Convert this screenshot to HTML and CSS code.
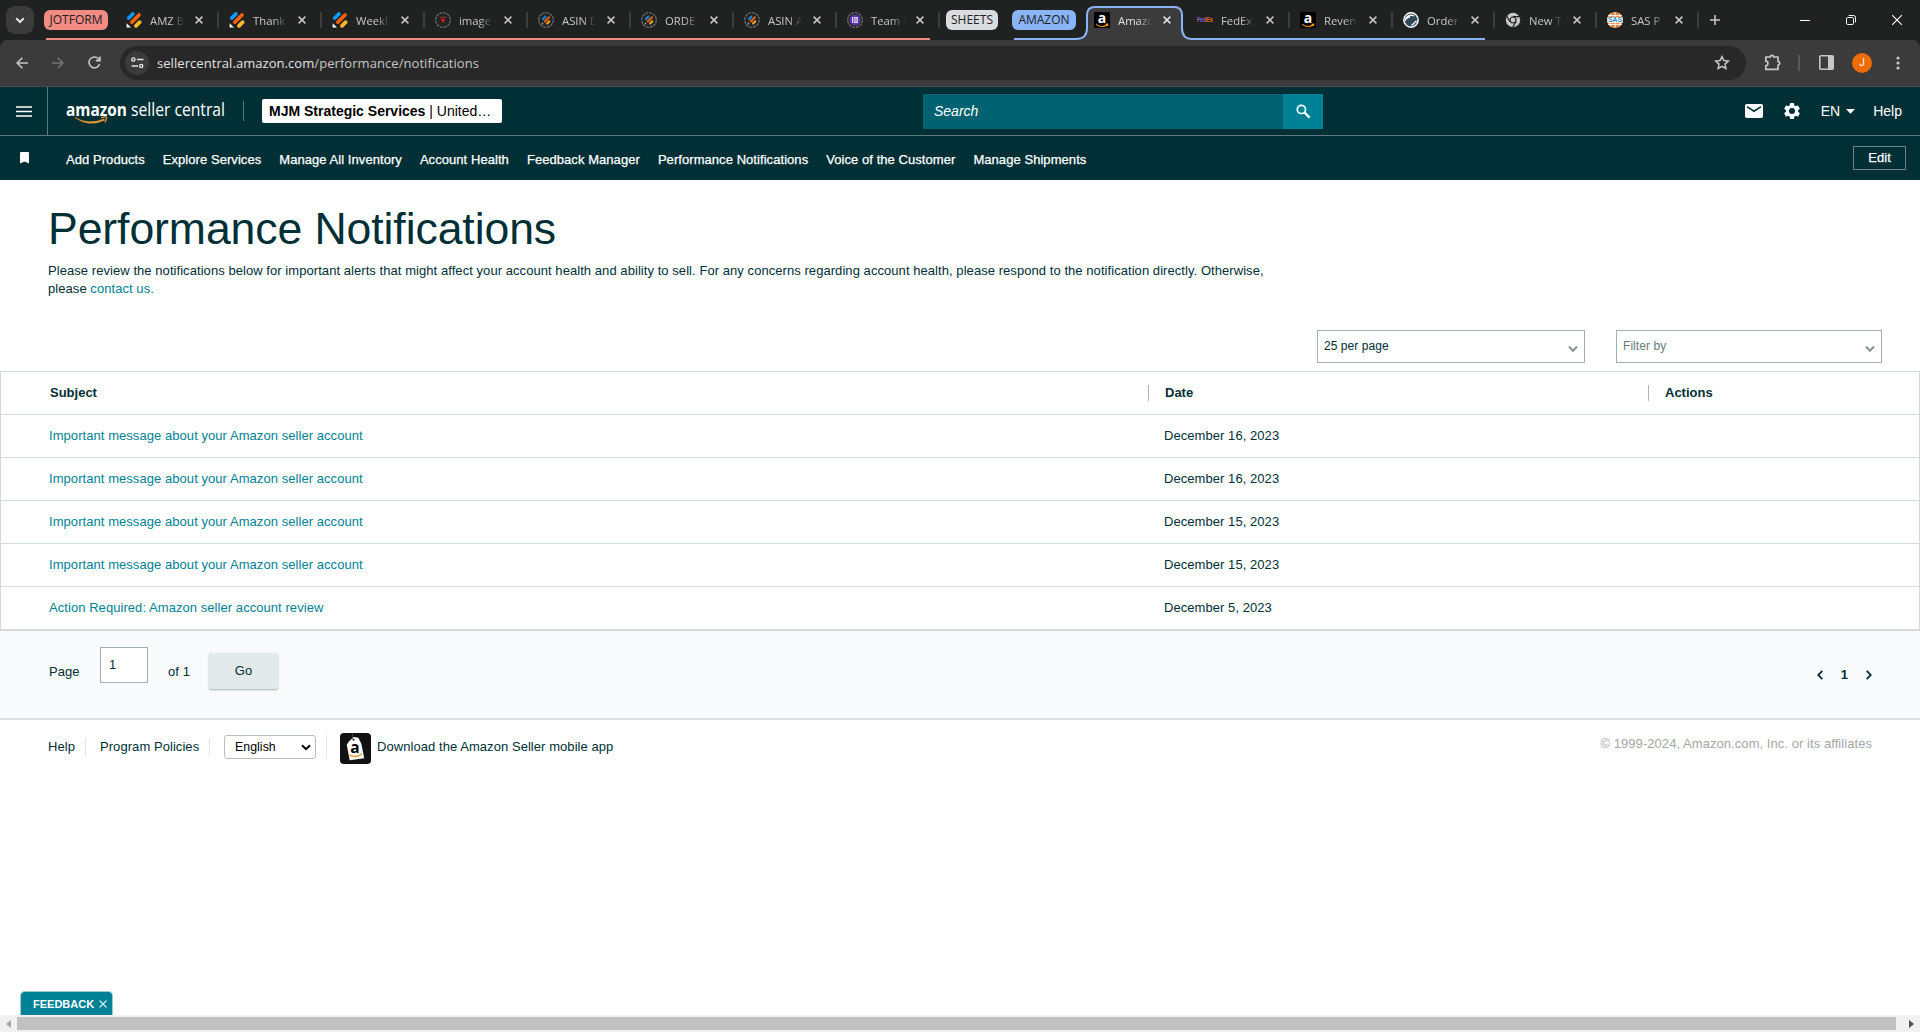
FILE: index.html
```html
<!DOCTYPE html>
<html lang="en">

<head>
    <meta charset="UTF-8">
    <title>Performance Notifications</title>
    <link rel="stylesheet" href="styles.css">
</head>

<body>
    <!-- shared icons -->
    <svg class="defs">
        <symbol id="close" viewBox="0 0 8 8">
            <path d="M.6 .6L7.4 7.4M7.4 .6L.6 7.4" stroke="currentColor" stroke-width="1.5" />
        </symbol>
        <symbol id="jotform" viewBox="0 0 16 16">
            <path d="M2.8 6L6.8 2" stroke="#0a99ff" stroke-width="3.8" stroke-linecap="round" />
            <path d="M5.8 10.2L13 3" stroke="#ff6100" stroke-width="3.6" stroke-linecap="round" />
            <path d="M10 13.8L13.6 10.2" stroke="#ffb629" stroke-width="3.8" stroke-linecap="round" />
            <path d="M.6 11.2V15.6H5z" fill="#fff" />
        </symbol>
        <symbol id="jotform-ring" viewBox="0 0 16 16">
            <circle cx="8" cy="8" r="7.3" fill="none" stroke="#777" stroke-width="1.1" stroke-dasharray="3 .8" />
            <path d="M5 7.2L7.4 4.7" stroke="#0a80d4" stroke-width="2.4" stroke-linecap="round" />
            <path d="M6.8 9.4L11 5.2" stroke="#e05a08" stroke-width="2.2" stroke-linecap="round" />
            <path d="M9.2 11.4L11.2 9.4" stroke="#e0a028" stroke-width="2.4" stroke-linecap="round" />
            <path d="M3.8 10.2V12.2H5.8z" fill="#ccc" />
        </symbol>
        <symbol id="amazon" viewBox="0 0 16 16">
            <path d="M0 0H16V16H0z" fill="#000" />
            <text x="8" y="11" text-anchor="middle" class="fav-a">a</text>
            <path d="M2 12.4Q8 16.4 13 13M11.4 12.3L13.8 12.2L13.1 14.2" fill="none" stroke="#f90" stroke-width="1.1" />
        </symbol>
    </svg>

    <div class="tabstrip">
        <div class="tab-search">
            <svg width="10" height="7" viewBox="0 0 10 7"><path d="M1.2 1.2L5 5L8.8 1.2" fill="none" stroke="#e3e3e3" stroke-width="2" /></svg>
        </div>
        <div class="group red">
            <span class="chip">JOTFORM</span>
            <div class="tab"><svg class="fav"><use href="#jotform" /></svg><span class="name">AMZ B</span><svg class="x"><use href="#close" /></svg></div>
            <div class="tab"><svg class="fav"><use href="#jotform" /></svg><span class="name">Thank</span><svg class="x"><use href="#close" /></svg></div>
            <div class="tab"><svg class="fav"><use href="#jotform" /></svg><span class="name">Weekl</span><svg class="x"><use href="#close" /></svg></div>
            <div class="tab">
                <svg class="fav" viewBox="0 0 16 16">
                    <circle cx="8" cy="8" r="7.3" fill="none" stroke="#777" stroke-width="1.1" stroke-dasharray="3 .8" />
                    <path d="M4.5 5.2H11.5" stroke="#a33" stroke-width="1" />
                    <path d="M5.6 7H10.4L8 11.2z" fill="#e8141c" />
                </svg>
                <span class="name">image</span><svg class="x"><use href="#close" /></svg>
            </div>
            <div class="tab"><svg class="fav"><use href="#jotform-ring" /></svg><span class="name">ASIN D</span><svg class="x"><use href="#close" /></svg></div>
            <div class="tab"><svg class="fav"><use href="#jotform-ring" /></svg><span class="name">ORDE</span><svg class="x"><use href="#close" /></svg></div>
            <div class="tab"><svg class="fav"><use href="#jotform-ring" /></svg><span class="name">ASIN A</span><svg class="x"><use href="#close" /></svg></div>
            <div class="tab">
                <svg class="fav" viewBox="0 0 16 16">
                    <circle cx="8" cy="8" r="7.3" fill="none" stroke="#777" stroke-width="1.1" stroke-dasharray="3 .8" />
                    <circle cx="8" cy="8" r="5.6" fill="#5f35a8" />
                    <path d="M5 5H11V11H5z" fill="#d8cdf0" />
                    <path d="M6.6 5V11M7.4 7H10.4M7.4 9H10.4" stroke="#5f35a8" stroke-width=".7" />
                </svg>
                <span class="name">Team I</span><svg class="x"><use href="#close" /></svg>
            </div>
        </div>
        <span class="chip grey">SHEETS</span>
        <div class="group blue">
            <span class="chip">AMAZON</span>
            <div class="tab active"><svg class="fav"><use href="#amazon" /></svg><span class="name">Amazo</span><svg class="x"><use href="#close" /></svg></div>
            <div class="tab">
                <svg class="fav" viewBox="0 0 16 16">
                    <text x="0" y="10" class="fedex" textLength="9" lengthAdjust="spacingAndGlyphs" fill="#9a62d8">Fed</text>
                    <text x="9" y="10" class="fedex" textLength="7" lengthAdjust="spacingAndGlyphs" fill="#ff6a10">Ex</text>
                </svg>
                <span class="name">FedEx</span><svg class="x"><use href="#close" /></svg>
            </div>
            <div class="tab"><svg class="fav"><use href="#amazon" /></svg><span class="name">Reven</span><svg class="x"><use href="#close" /></svg></div>
            <div class="tab narrow">
                <svg class="fav" viewBox="0 0 16 16">
                    <circle cx="8" cy="8" r="7.2" fill="#2f4a5a" stroke="#fff" stroke-width="1.4" />
                    <path d="M2.2 9C2.6 4.5 6.5 2.4 11 3.6M3.5 6.4L7 4.6M8.6 13.6L13.6 8.8" fill="none" stroke="#fff" stroke-width="1.4" />
                </svg>
                <span class="name">Order</span><svg class="x"><use href="#close" /></svg>
            </div>
            <!-- group outline running around the active tab -->
            <svg class="outline" width="484" height="40" viewBox="0 0 484 40">
                <path class="fill" d="M64 40C72 40 75 37 75 29V15Q75 7 83 7H162Q170 7 170 15V29Q170 40 181 40z" />
                <path class="line" d="M2 39H64C72 39 75 35 75 28V15Q75 7 83 7H162Q170 7 170 15V28Q170 39 180 39H473" />
            </svg>
        </div>
        <div class="tab narrow">
            <svg class="fav" viewBox="0 0 16 16">
                <circle cx="8" cy="8" r="7.2" fill="#c7c7c7" />
                <path d="M8 4.6H14.6M5 9.7L1.8 4.2M11 9.7L7.6 15.3" stroke="#202221" stroke-width="1.2" />
                <circle cx="8" cy="8" r="3" fill="#c7c7c7" stroke="#202221" stroke-width="1.2" />
            </svg>
            <span class="name">New T</span><svg class="x"><use href="#close" /></svg>
        </div>
        <div class="tab narrow">
            <svg class="fav" viewBox="0 0 16 16">
                <circle cx="8" cy="8" r="8" fill="#e8833a" />
                <path d="M8 0V16M1 3.6H15M1 12.4H15M3.6 1.5Q1 8 3.6 14.5M12.4 1.5Q15 8 12.4 14.5" fill="none" stroke="#fff" stroke-width=".9" />
                <path d="M.4 5.2H15.6V10.8H.4z" fill="#fff" />
                <text x="1" y="10.3" class="sas" textLength="14" lengthAdjust="spacingAndGlyphs">SAS</text>
            </svg>
            <span class="name">SAS P</span><svg class="x"><use href="#close" /></svg>
        </div>
        <svg class="plus" width="10" height="10"><path d="M5 0V10M0 5H10" stroke="#c7c7c7" stroke-width="1.6" /></svg>
        <div class="window-buttons">
            <svg width="10" height="10"><path d="M0 5.5H10" stroke="#fff" /></svg>
            <svg width="10" height="10" viewBox="0 0 10 10"><rect x=".5" y="2.5" width="7" height="7" rx="1.2" fill="none" stroke="#fff" /><path d="M2.6 .5H7.5Q9.5 .5 9.5 2.5V7.4" fill="none" stroke="#fff" /></svg>
            <svg width="10" height="10"><path d="M0 0L10 10M10 0L0 10" stroke="#fff" stroke-width="1.1" /></svg>
        </div>
    </div>

    <div class="toolbar-wrap">
        <div class="toolbar">
            <svg class="back" width="12" height="12" viewBox="0 0 12 12"><path d="M12 6H1.2M6.4 .7L1.1 6L6.4 11.3" fill="none" stroke="#c7c7c7" stroke-width="1.6" /></svg>
            <svg class="forward" width="12" height="12" viewBox="0 0 12 12"><path d="M0 6H10.8M5.6 .7L10.9 6L5.6 11.3" fill="none" stroke="#757575" stroke-width="1.6" /></svg>
            <svg class="reload" width="13" height="13" viewBox="0 0 13 13"><path d="M11.6 8A5.4 5.4 0 1 1 10.4 2.7L11.6 4M12 .4V4.6H7.8" fill="none" stroke="#c7c7c7" stroke-width="1.6" /></svg>
            <div class="omnibox">
                <span class="site-info">
                    <svg width="13" height="12" viewBox="0 0 13 12"><path d="M6 2.5H12.5M.5 9H7" stroke="#e3e3e3" stroke-width="1.6" /><circle cx="2.4" cy="2.5" r="1.6" fill="none" stroke="#e3e3e3" stroke-width="1.4" /><circle cx="10.2" cy="9" r="1.6" fill="none" stroke="#e3e3e3" stroke-width="1.4" /></svg>
                </span>
                <span class="url">sellercentral.amazon.com<i>/performance/notifications</i></span>
                <svg class="star" width="16" height="15" viewBox="0 0 16 15"><path d="M8 1.6L9.9 5.6L14.3 6.1L11 9.1L11.9 13.5L8 11.3L4.1 13.5L5 9.1L1.7 6.1L6.1 5.6z" fill="none" stroke="#c7c7c7" stroke-width="1.5" /></svg>
            </div>
            <svg class="puzzle" width="17" height="17" viewBox="0 0 17 17"><path d="M1.8 3H6.3C6.3 .8 9.7 .8 9.7 3H14V7.6C16.3 7.6 16.3 11 14 11V15.4H1.8V11.6C4.6 11.4 4.6 7.4 1.8 7.2z" fill="none" stroke="#c7c7c7" stroke-width="1.7" stroke-linejoin="round" /></svg>
            <span class="bar"></span>
            <svg class="panel" width="15" height="15" viewBox="0 0 15 15"><rect x=".8" y=".8" width="13.4" height="13.4" rx="1" fill="none" stroke="#c7c7c7" stroke-width="1.6" /><path d="M9 1H14V14H9z" fill="#c7c7c7" /></svg>
            <span class="avatar">J</span>
            <svg class="dots" width="4" height="14"><circle cx="2" cy="2" r="1.6" /><circle cx="2" cy="7" r="1.6" /><circle cx="2" cy="12" r="1.6" /></svg>
        </div>
    </div>

    <div class="header">
        <div class="menu"><svg width="16" height="11"><path d="M0 1H16M0 5.5H16M0 10H16" stroke="#fff" stroke-width="1.6" /></svg></div>
        <svg class="logo" width="160" height="30" viewBox="0 0 160 30">
            <text x="0" y="17" class="logo-bold" textLength="61" lengthAdjust="spacingAndGlyphs">amazon</text>
            <text x="65" y="17" class="logo-light" textLength="94" lengthAdjust="spacingAndGlyphs">seller central</text>
            <path d="M9 18.5Q23 26.4 38 20L38.6 21.2Q22 28.6 9 18.5z" fill="#f29a2e" stroke="#f29a2e" stroke-width=".5" />
            <path d="M35 18.6Q40.6 17.2 40.6 18.6Q40.6 20.6 38.8 23.4" fill="none" stroke="#f29a2e" stroke-width="1.2" />
        </svg>
        <span class="split"></span>
        <div class="account"><b>MJM Strategic Services</b> | United…</div>
        <div class="search">
            <span>Search</span>
            <div class="search-btn"><svg width="15" height="15" viewBox="0 0 15 15"><circle cx="5.4" cy="5.4" r="4.1" fill="none" stroke="#fff" stroke-width="1.7" /><path d="M8.5 8.5L13.6 13.6" stroke="#fff" stroke-width="2.2" /></svg></div>
        </div>
        <div class="header-right">
            <svg width="18" height="14" viewBox="0 0 18 14"><rect width="18" height="14" rx="1.8" fill="#fff" /><path d="M2 2.6L9 7.2L16 2.6" fill="none" stroke="#002f36" stroke-width="1.6" /></svg>
            <svg class="gear" width="20" height="20" viewBox="0 0 24 24"><path fill="#fff" d="M19.14 12.94c.04-.3.06-.61.06-.94 0-.32-.02-.64-.07-.94l2.03-1.58a.49.49 0 0 0 .12-.61l-1.92-3.32a.49.49 0 0 0-.59-.22l-2.39.96c-.5-.38-1.03-.7-1.62-.94l-.36-2.54a.48.48 0 0 0-.48-.41h-3.84c-.24 0-.43.17-.47.41l-.36 2.54c-.59.24-1.13.57-1.62.94l-2.39-.96a.48.48 0 0 0-.59.22L2.74 8.87c-.12.21-.08.47.12.61l2.03 1.58c-.05.3-.09.63-.09.94s.02.64.07.94l-2.03 1.58a.49.49 0 0 0-.12.61l1.92 3.32c.12.22.37.29.59.22l2.39-.96c.5.38 1.03.7 1.62.94l.36 2.54c.05.24.24.41.48.41h3.84c.24 0 .44-.17.47-.41l.36-2.54c.59-.24 1.13-.56 1.62-.94l2.39.96c.22.08.47 0 .59-.22l1.92-3.32a.49.49 0 0 0-.12-.61zM12 15.6A3.6 3.6 0 1 1 12 8.4a3.6 3.6 0 0 1 0 7.2z" /></svg>
            <span class="lang">EN</span>
            <svg class="caret" width="9" height="5"><path d="M0 0H9L4.5 4.8z" fill="#fff" /></svg>
            <span>Help</span>
        </div>
    </div>

    <div class="nav">
        <svg class="bookmark" width="9" height="12"><path d="M0 1Q0 0 1 0H8Q9 0 9 1V11.6L4.5 9.6L0 11.6z" fill="#fff" /></svg>
        <a>Add Products</a>
        <a>Explore Services</a>
        <a>Manage All Inventory</a>
        <a>Account Health</a>
        <a>Feedback Manager</a>
        <a>Performance Notifications</a>
        <a>Voice of the Customer</a>
        <a>Manage Shipments</a>
        <span class="edit">Edit</span>
    </div>

    <div class="content">
        <h1>Performance Notifications</h1>
        <p>Please review the notifications below for important alerts that might affect your account health and ability to sell. For any concerns regarding account health, please respond to the notification directly. Otherwise,<br>please <a>contact us.</a></p>
        <div class="filters">
            <div class="dropdown">25 per page <svg width="10" height="8"><path d="M1 1.5L5 5.7L9 1.5" fill="none" stroke="#879596" stroke-width="2" /></svg></div>
            <div class="dropdown filter">Filter by <svg width="10" height="8"><path d="M1 1.5L5 5.7L9 1.5" fill="none" stroke="#879596" stroke-width="2" /></svg></div>
        </div>
    </div>

    <div class="table">
        <div class="row head"><b>Subject</b><b>Date</b><b>Actions</b></div>
        <div class="row"><a>Important message about your Amazon seller account</a><span>December 16, 2023</span></div>
        <div class="row"><a>Important message about your Amazon seller account</a><span>December 16, 2023</span></div>
        <div class="row"><a>Important message about your Amazon seller account</a><span>December 15, 2023</span></div>
        <div class="row"><a>Important message about your Amazon seller account</a><span>December 15, 2023</span></div>
        <div class="row"><a>Action Required: Amazon seller account review</a><span>December 5, 2023</span></div>
    </div>

    <div class="pagination">
        <span class="page-label">Page</span>
        <div class="page-input">1</div>
        <span class="page-of">of 1</span>
        <div class="go">Go</div>
        <div class="pager">
            <svg width="6" height="10"><path d="M5.3 .8L1.2 5L5.3 9.2" fill="none" stroke="#002f36" stroke-width="1.8" /></svg>
            <b>1</b>
            <svg width="6" height="10"><path d="M.7 .8L4.8 5L.7 9.2" fill="none" stroke="#002f36" stroke-width="1.8" /></svg>
        </div>
    </div>

    <div class="footer">
        <span class="f-help">Help</span>
        <span class="f-policy">Program Policies</span>
        <div class="f-lang">
            <div class="select">English <svg width="10" height="7"><path d="M1 1.2L5 5.2L9 1.2" fill="none" stroke="#000" stroke-width="2" /></svg></div>
        </div>
        <svg class="app" width="31" height="31" viewBox="0 0 32 32">
            <rect width="32" height="32" rx="4" fill="#111" />
            <path d="M9 9L14 4L19 5L22 11L25 26L10 28L7 12z" fill="#fff" />
            <path d="M13 0V6" stroke="#444" />
            <circle cx="14" cy="7" r="1" fill="#111" />
            <text x="15.5" y="21" text-anchor="middle" class="app-a">a</text>
            <path d="M10 22.5Q16 26.5 22.5 21.5" fill="none" stroke="#f29a2e" stroke-width="1.5" />
        </svg>
        <span>Download the Amazon Seller mobile app</span>
        <span class="copy">© 1999-2024, Amazon.com, Inc. or its affiliates</span>
    </div>

    <div class="feedback">FEEDBACK <svg width="8" height="8" viewBox="0 0 8 8"><path d="M.5 .5L7.5 7.5M7.5 .5L.5 7.5" stroke="#d5edf0" stroke-width="1.2" /></svg></div>
    <div class="scrollbar">
        <svg width="5" height="8"><path d="M5 0V8L0 4z" fill="#a3a3a3" /></svg>
        <div class="thumb"></div>
        <svg width="5" height="8"><path d="M0 0V8L5 4z" fill="#505050" /></svg>
    </div>
</body>

</html>
```
FILE: styles.css
```css
* {
    margin: 0;
    padding: 0;
    box-sizing: border-box;
}

body {
    display: flex;
    flex-direction: column;
    height: 1032px;
    overflow: hidden;
    background: #fff;
    color: #002f36;
    font: 13px/18px "Liberation Sans", Arial, sans-serif;
    letter-spacing: 0.06px;
    white-space: nowrap;
}

svg {
    display: block;
    flex: none;
}

.defs {
    position: absolute;
    width: 0;
    height: 0;
}

/* browser tabs */
.tabstrip {
    display: flex;
    height: 40px;
    padding-left: 6px;
    background: #202221;
    color: #c7c7c7;
    font: 11.3px/20px "Open Sans", "Noto Sans", sans-serif;
    letter-spacing: 0;
}

.tab-search {
    display: flex;
    align-items: center;
    justify-content: center;
    width: 28px;
    height: 28px;
    margin: 6px 10px 0 0;
    border-radius: 9px;
    background: #3b3b3b;
}

.group {
    position: relative;
    display: flex;
}

.red::after {
    content: "";
    position: absolute;
    left: 2px;
    right: 10px;
    bottom: 0;
    height: 2px;
    background: #f28b82;
}

.chip {
    width: 64px;
    height: 20px;
    margin: 10px 8px 0 0;
    border-radius: 6px;
    background: #f28b82;
    color: #202124;
    font-size: 12px;
    line-height: 19px;
    text-align: center;
}

.chip.grey {
    width: 52px;
    margin: 10px 14px 0 6px;
    background: #dadce0;
}

.blue .chip {
    background: #8ab4f8;
}

.tab {
    position: relative;
    z-index: 1;
    display: flex;
    align-items: center;
    width: 103px;
    height: 40px;
    padding-left: 10px;
}

.tab.narrow {
    width: 102px;
}

.tab::after {
    content: "";
    width: 2px;
    height: 16px;
    margin-left: auto;
    background: #3d3f3e;
}

.tab.active::after {
    background: none;
}

.active {
    color: #e3e3e3;
}

.fav {
    width: 16px;
    height: 16px;
}

.name {
    width: 34px;
    margin-left: 8px;
    padding-top: 2px;
    -webkit-mask-image: linear-gradient(to right, #000 60%, transparent);
    mask-image: linear-gradient(to right, #000 60%, transparent);
}

.x {
    width: 8px;
    height: 8px;
    margin-left: 11px;
}

.narrow .x {
    margin-left: 10px;
}

.fav-a {
    fill: #fff;
    font: bold 14px "Open Sans", sans-serif;
}

.fedex {
    font: bold 7.5px "Liberation Sans", sans-serif;
}

.sas {
    fill: #1c88c7;
    font: bold 7px "Liberation Sans", sans-serif;
}

.outline {
    position: absolute;
    left: 0;
    top: 0;
}

.outline .fill {
    fill: #3b3b3b;
}

.outline .line {
    fill: none;
    stroke: #8ab4f8;
    stroke-width: 2;
}

.plus {
    margin: 15px 0 0 11px;
}

.window-buttons {
    display: flex;
    gap: 36px;
    margin: 15px 18px 0 auto;
}

/* browser toolbar */
.toolbar-wrap {
    background: #202221;
}

.toolbar {
    display: flex;
    align-items: center;
    height: 47px;
    padding: 0 20px 1px 16px;
    border-bottom: 1px solid #4a4a4a;
    border-radius: 8px 8px 0 0;
    background: #3b3b3b;
}

.forward {
    margin-left: 24px;
}

.reload {
    margin: 0 19px 0 24px;
}

.omnibox {
    display: flex;
    align-items: center;
    width: 1626px;
    height: 34px;
    padding: 0 16px 0 5px;
    border-radius: 17px;
    background: #282828;
}

.site-info {
    display: flex;
    align-items: center;
    justify-content: center;
    width: 24px;
    height: 24px;
    margin-right: 8px;
    border-radius: 12px;
    background: #3b3b3b;
}

.url {
    color: #e3e3e3;
    font: 13px/18px "Open Sans", "Noto Sans", sans-serif;
}

.url i {
    color: #c7c7c7;
    font-style: normal;
}

.star {
    margin-left: auto;
}

.puzzle {
    margin-left: 18px;
}

.bar {
    width: 2px;
    height: 16px;
    margin: 0 19px 0 17px;
    background: #5b5b5b;
}

.avatar {
    width: 20px;
    height: 20px;
    margin: 0 24px 0 18px;
    border-radius: 10px;
    background: #ef6c00;
    color: #fff;
    font: 10px/20px Roboto, sans-serif;
    text-align: center;
}

.dots {
    fill: #c7c7c7;
}

/* seller central header */
.header {
    display: flex;
    align-items: center;
    height: 49px;
    border-bottom: 1px solid #5d7a7e;
    background: #002f36;
    color: #fff;
    font-size: 14px;
    letter-spacing: 0;
}

.menu {
    display: flex;
    align-items: center;
    width: 48px;
    height: 48px;
    padding-left: 16px;
    border-right: 1px solid #5d7a7e;
}

.logo {
    margin: 5px 17px 0 18px;
    fill: #fff;
}

.logo-bold {
    font: bold 18px "Open Sans", sans-serif;
}

.logo-light {
    font: 18px "Open Sans", sans-serif;
}

.split {
    width: 1px;
    height: 20px;
    margin-right: 18px;
    background: #5d7a7e;
}

.account {
    width: 240px;
    height: 24px;
    padding-left: 7px;
    border-radius: 2px;
    background: #fff;
    color: #000;
    line-height: 24px;
}

.search {
    display: flex;
    align-items: center;
    justify-content: space-between;
    width: 400px;
    height: 35px;
    margin-left: 421px;
    padding-left: 11px;
    background: #006170;
    font-style: italic;
}

.search-btn {
    display: flex;
    align-items: center;
    justify-content: center;
    width: 40px;
    height: 35px;
    background: #008296;
}

.header-right {
    display: flex;
    align-items: center;
    margin: 0 18px 0 auto;
}

.gear {
    margin: 0 19px;
}

.caret {
    margin: 0 18px 0 6px;
}

.nav {
    display: flex;
    align-items: center;
    gap: 18px;
    height: 44px;
    padding: 0 14px 0 20px;
    background: #002f36;
    color: #fff;
}

.nav a {
    padding-top: 3px;
    color: #fff;
    -webkit-text-stroke: 0.25px #fff;
}

.bookmark {
    margin-right: 19px;
}

.edit {
    width: 53px;
    height: 24px;
    margin-left: auto;
    border: 1px solid #6c8589;
    line-height: 22px;
    text-align: center;
    -webkit-text-stroke: 0.25px #fff;
}

/* page content */
.content {
    height: 191px;
    padding: 21px 0 0 48px;
}

a {
    color: #008296;
}

h1 {
    height: 61px;
    font-size: 44.6px;
    font-weight: normal;
    line-height: 56px;
    letter-spacing: -0.1px;
}

.filters {
    display: flex;
    justify-content: flex-end;
    gap: 31px;
    padding: 32px 38px 0 0;
}

.dropdown {
    display: flex;
    justify-content: space-between;
    width: 268px;
    height: 33px;
    padding: 6px 6px 0;
    border: 1px solid #9fb0b2;
    font-size: 12px;
}

.dropdown.filter {
    width: 266px;
    color: #697b7d;
}

.dropdown svg {
    margin-top: 8px;
}

.table {
    border: 1px solid #d5dbdb;
    border-width: 1px 1px 0;
}

.row {
    display: grid;
    grid-template-columns: 1115px 501px 1fr;
    align-items: center;
    height: 43px;
    padding-left: 48px;
    border-bottom: 1px solid #d5dbdb;
}

.row:last-child {
    height: 44px;
    border-bottom: 2px solid #d8dcde;
}

.row.head {
    grid-template-columns: 1098px 500px 1fr;
    padding-left: 49px;
    letter-spacing: 0;
}

.head b + b {
    height: 16px;
    padding-left: 16px;
    border-left: 1px solid #aab7b8;
    line-height: 16px;
}

.pagination {
    display: flex;
    height: 89px;
    padding: 0 48px 0 49px;
    border-bottom: 2px solid #dcdfe2;
    background: #f9fafc;
}

.page-label {
    width: 51px;
    margin-top: 32px;
}

.page-input {
    width: 48px;
    height: 36px;
    margin-top: 16px;
    padding: 8px;
    border: 1px solid #a3b1b2;
    background: #fff;
}

.page-of {
    width: 61px;
    margin-top: 32px;
    padding-left: 20px;
}

.go {
    width: 69px;
    height: 36px;
    margin-top: 22px;
    border-radius: 2px;
    background: #e3eaeb;
    box-shadow: 0 1px 2px #a8b2b3;
    line-height: 35px;
    text-align: center;
}

.pager {
    display: flex;
    align-items: center;
    gap: 18px;
    height: 18px;
    margin: 35px 0 0 auto;
}

.footer {
    display: flex;
    align-items: center;
    height: 54px;
    padding: 0 48px;
}

.f-help {
    width: 38px;
    border-right: 1px solid #e1e4e5;
}

.f-policy {
    width: 124px;
    padding-left: 14px;
    border-right: 1px solid #e1e4e5;
}

.f-lang {
    width: 117px;
    margin-right: 13px;
    padding-left: 14px;
    border-right: 1px solid #e1e4e5;
}

.select {
    display: flex;
    align-items: center;
    justify-content: space-between;
    width: 92px;
    height: 24px;
    padding: 0 4px 0 10px;
    border: 1px solid #b9bdbe;
    border-radius: 3px;
    color: #000;
    font-size: 12.3px;
}

.app {
    margin: 2px 6px 0 0;
}

.app-a {
    font: bold 16px "Open Sans", sans-serif;
}

.copy {
    margin: -6px 0 0 auto;
    color: #a6a6a6;
}

.feedback {
    display: flex;
    align-items: center;
    gap: 5px;
    width: 93px;
    height: 24px;
    margin: auto 0 0 20px;
    padding-left: 12px;
    border: 1px solid #9fc7ce;
    border-bottom: 0;
    border-radius: 5px 5px 0 0;
    background: #008296;
    color: #fff;
    font-size: 11px;
    font-weight: bold;
    letter-spacing: 0;
}

.scrollbar {
    display: flex;
    align-items: center;
    height: 17px;
    padding: 0 6px;
    background: #f1f1f1;
}

.thumb {
    width: 1879px;
    height: 13px;
    margin: 0 auto 0 6px;
    background: #c1c1c1;
}
```
